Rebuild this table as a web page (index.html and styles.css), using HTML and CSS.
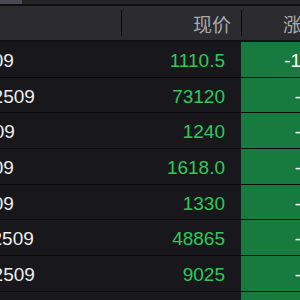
FILE: index.html
```html
<!DOCTYPE html>
<html lang="zh">
<head>
<meta charset="utf-8">
<link rel="stylesheet" href="styles.css">
</head>
<body>
<div class="screen">
  <div class="topbar"><div class="tab"></div></div>
  <div class="viewport">
    <div class="table">
      <div class="row head">
        <div class="cell name"></div>
        <div class="cell price">现价</div>
        <div class="cell chg">涨跌幅</div>
      </div>
      <div class="row"><div class="cell name">v2509</div><div class="cell price">1110.5</div><div class="cell chg">-10.35%</div></div>
      <div class="row"><div class="cell name">MO2509</div><div class="cell price">73120</div><div class="cell chg">-0.85%</div></div>
      <div class="row"><div class="cell name">p2509</div><div class="cell price">1240</div><div class="cell chg">-0.64%</div></div>
      <div class="row"><div class="cell name">y2509</div><div class="cell price">1618.0</div><div class="cell chg">-0.58%</div></div>
      <div class="row"><div class="cell name">c2509</div><div class="cell price">1330</div><div class="cell chg">-0.45%</div></div>
      <div class="row"><div class="cell name">RM2509</div><div class="cell price">48865</div><div class="cell chg">-0.41%</div></div>
      <div class="row"><div class="cell name">OM2509</div><div class="cell price">9025</div><div class="cell chg">-0.39%</div></div>
      <div class="row"><div class="cell name">SR2509</div><div class="cell price">5820</div><div class="cell chg">-0.36%</div></div>
    </div>
  </div>
</div>
</body>
</html>
```
FILE: styles.css
```css
* { box-sizing: border-box; margin: 0; padding: 0; }
html, body { width: 300px; height: 300px; overflow: hidden; background: #0c0c0e; }
body { font-family: "Liberation Sans", "Noto Sans CJK SC", sans-serif; font-size: 19px; }
.screen { width: 300px; height: 300px; overflow: hidden; display: flex; flex-direction: column; }
.topbar { height: 4px; background: #232328; display: flex; flex: none; }
.tab { width: 22px; background: #4a4a54; }
.viewport { flex: 1; overflow: hidden; border-top: 2px solid #0f0f12; }
.table { margin-left: -38px; width: 420px; display: flex; flex-direction: column; }
.row { display: flex; height: 35.7px; border-bottom: 1.5px solid #0c0c0e; background: #18181c; flex: none; }
.row.head { height: 36px; background: #2b2b30; padding: 4px 0; border-bottom: 2px solid #121215; }
.cell { display: flex; align-items: center; white-space: nowrap; padding-top: 3px; }
.name { width: 159px; color: #ececec; }
.price { width: 120px; justify-content: flex-end; padding-right: 16px; color: #2ec95a; }
.chg { width: 131px; justify-content: flex-end; padding-right: 17px; color: #ffffff; background: #177a3e; }
.head .cell { background: transparent; color: #a9a9ab; font-family: "Noto Sans CJK SC", sans-serif; padding-top: 0; }
.head .price { border-left: 1px solid #0a0a0a; padding-right: 10px; }
.head .chg { border-left: 1px solid #0a0a0a; justify-content: flex-start; padding-left: 41px; padding-right: 0; }
```
